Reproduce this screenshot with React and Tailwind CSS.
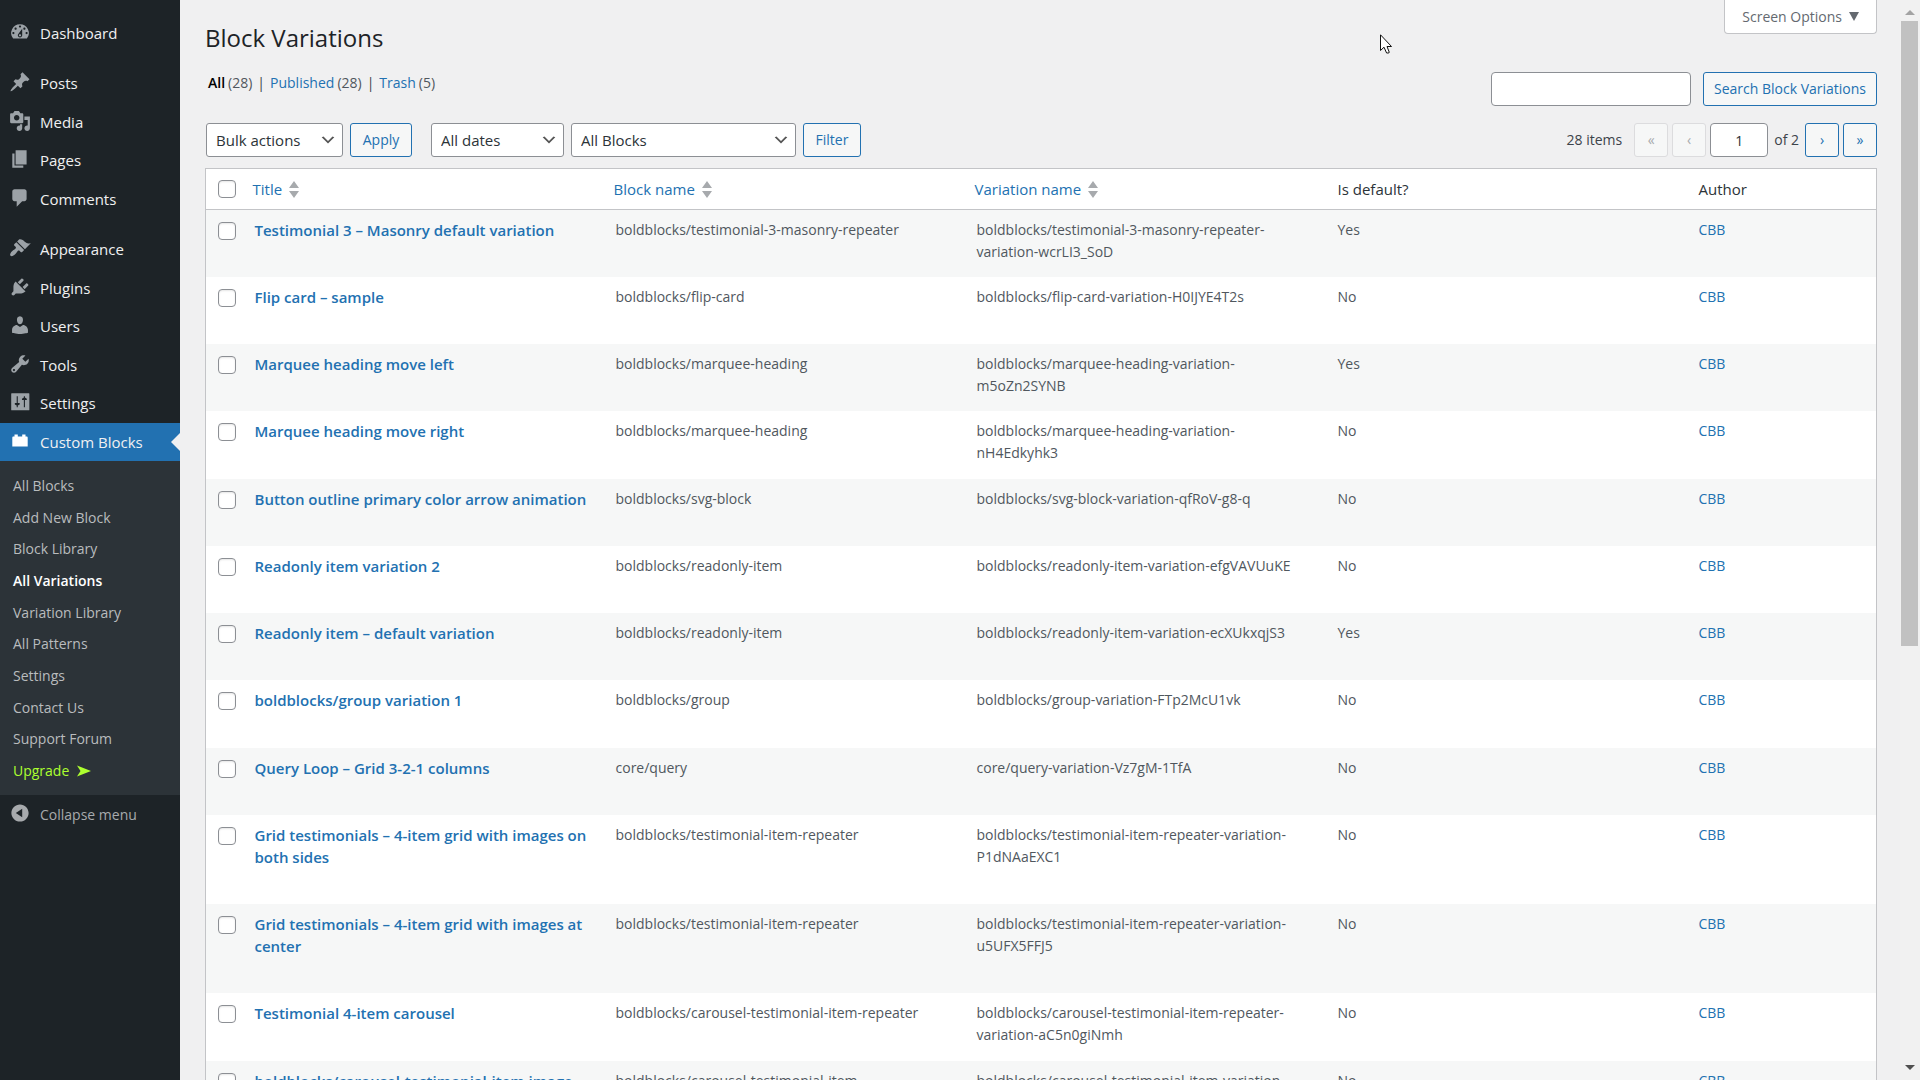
const icons = {
  dashboard:
    'M3.76 16h12.48A7.998 7.998 0 0 0 10 3a7.998 7.998 0 0 0-6.24 13zM10 4c.55 0 1 .45 1 1s-.45 1-1 1-1-.45-1-1 .45-1 1-1zM6 6c.55 0 1 .45 1 1s-.45 1-1 1-1-.45-1-1 .45-1 1-1zm8 0c.55 0 1 .45 1 1s-.45 1-1 1-1-.45-1-1 .45-1 1-1zm-5.37 5.55L12 7v6c0 1.1-.9 2-2 2s-2-.9-2-2c0-.57.24-1.08.63-1.45zM4 10c.55 0 1 .45 1 1s-.45 1-1 1-1-.45-1-1 .45-1 1-1zm12 0c.55 0 1 .45 1 1s-.45 1-1 1-1-.45-1-1 .45-1 1-1zm-5 3c0-.55-.45-1-1-1s-1 .45-1 1 .45 1 1 1 1-.45 1-1z',
  posts:
    'M10.44 3.02l1.82-1.82 6.36 6.35-1.83 1.82c-1.05-.68-2.48-.57-3.41.36l-.75.75c-.92.93-1.04 2.35-.35 3.41l-1.83 1.82-2.41-2.41-2.8 2.79c-.42.42-3.38 2.71-3.8 2.29s1.86-3.39 2.28-3.81l2.79-2.79L4.1 9.36l1.83-1.82c1.05.69 2.48.57 3.4-.36l.75-.75c.93-.92 1.05-2.35.36-3.41z',
  media:
    'M13 11V4c0-.55-.45-1-1-1h-1.67L9 1H5L3.67 3H2c-.55 0-1 .45-1 1v7c0 .55.45 1 1 1h10c.55 0 1-.45 1-1zM7 4.5c1.38 0 2.5 1.12 2.5 2.5S8.38 9.5 7 9.5 4.5 8.38 4.5 7 5.62 4.5 7 4.5zM14 6h5v10.5c0 1.38-1.12 2.5-2.5 2.5S14 17.88 14 16.5s1.12-2.5 2.5-2.5c.17 0 .34.02.5.05V9h-3V6zm-4 8.05V13h2v3.5c0 1.38-1.12 2.5-2.5 2.5S7 17.88 7 16.5 8.12 14 9.5 14c.17 0 .34.02.5.05z',
  pages: 'M6 15V2h10v13H6zm-1 1h8v2H3V5h2v11z',
  comments: 'M5 2h9c1.1 0 2 .9 2 2v7c0 1.1-.9 2-2 2h-2l-5 5v-5H5c-1.1 0-2-.9-2-2V4c0-1.1.9-2 2-2z',
  appearance:
    'M14.48 11.06L7.41 3.99l1.5-1.5c.5-.56 2.3-.47 3.51.32 1.21.8 1.43 1.28 2.91 2.1 1.18.64 2.45 1.26 4.45.85zm-.71.71L6.7 4.7 4.93 6.47c-.39.39-.39 1.02 0 1.41l1.06 1.06c.39.39.39 1.03 0 1.42-.6.6-1.43 1.11-2.21 1.69-.35.26-.7.53-1.01.84C1.43 14.23.4 16.08 1.4 17.07c.99 1 2.84-.03 4.18-1.36.31-.31.58-.66.85-1.02.57-.78 1.08-1.61 1.69-2.21.39-.39 1.02-.39 1.41 0l1.06 1.06c.39.39 1.02.39 1.41 0z',
  plugins:
    'M13.11 4.36L9.87 7.6 8 5.73l3.24-3.24c.35-.34 1.05-.2 1.56.32.52.51.66 1.21.31 1.55zm-8 1.77l.91-1.12 9.01 9.01-1.19.84c-.71.71-2.63 1.16-3.82 1.16H6.14L4.9 17.26c-.59.59-1.54.59-2.12 0-.59-.58-.59-1.53 0-2.12l1.24-1.24v-3.88c0-1.13.4-3.19 1.09-3.89zm7.26 3.97l3.24-3.24c.34-.35 1.04-.21 1.55.31.52.51.66 1.21.31 1.55l-3.24 3.25z',
  users:
    'M10 9.25c-2.27 0-2.73-3.44-2.73-3.44C7 4.02 7.82 2 9.97 2c2.16 0 2.98 2.02 2.71 3.81 0 0-.41 3.44-2.68 3.44zm0 2.57L12.72 10c2.39 0 4.52 2.33 4.52 4.53v2.49s-3.65 1.13-7.24 1.13c-3.65 0-7.24-1.13-7.24-1.13v-2.49c0-2.25 1.94-4.48 4.47-4.48z',
  tools:
    'M16.68 9.77c-1.34 1.34-3.3 1.67-4.95.99l-5.41 6.52c-.99.99-2.59.99-3.58 0s-.99-2.59 0-3.57l6.52-5.42c-.68-1.65-.35-3.61.99-4.95 1.28-1.28 3.12-1.62 4.72-1.06l-2.89 2.89 2.82 2.82 2.86-2.87c.53 1.58.18 3.39-1.08 4.65zM3.81 16.21c.4.39 1.04.39 1.43 0 .4-.4.4-1.04 0-1.43-.39-.4-1.03-.4-1.43 0-.39.39-.39 1.03 0 1.43z',
  settings:
    'M2.5 2h15.500a.5.5 0 0 1 .5.500v14.500a.5.5 0 0 1-.5.500H2.500a.5.5 0 0 1-.5-.5V2.500a.5.5 0 0 1 .5-.5zM7 4.700V11H5.300v1.200L7 13.200V14.700H8V13.200L9.700 12.200V11H8V4.700zM13.500 4.700V6L11.800 7v1.200H13.500V14.700H14.500V8.200H16.200V7L14.500 6V4.700z',
  block: 'M15 6V4h-3v2H8V4H5v2H4c-.6 0-1 .4-1 1v8h14V7c0-.6-.4-1-1-1h-1z',
  collapse:
    'M10 2.16c4.33 0 7.84 3.51 7.84 7.84s-3.51 7.84-7.84 7.84S2.16 14.33 2.16 10 5.71 2.16 10 2.16zm2 11.72V6.12L6.18 9.97z',
};

const contentMenu = [
  { label: 'Posts', icon: 'posts' },
  { label: 'Media', icon: 'media' },
  { label: 'Pages', icon: 'pages' },
  { label: 'Comments', icon: 'comments' },
];

const adminMenu = [
  { label: 'Appearance', icon: 'appearance' },
  { label: 'Plugins', icon: 'plugins' },
  { label: 'Users', icon: 'users' },
  { label: 'Tools', icon: 'tools' },
  { label: 'Settings', icon: 'settings' },
  { label: 'Custom Blocks', icon: 'block', active: true },
];

const subMenu = [
  'All Blocks',
  'Add New Block',
  'Block Library',
  'All Variations',
  'Variation Library',
  'All Patterns',
  'Settings',
  'Contact Us',
  'Support Forum',
];

const rows = [
  ['Testimonial 3 – Masonry default variation', 'boldblocks/testimonial-3-masonry-repeater', 'boldblocks/testimonial-3-masonry-repeater-variation-wcrLI3_SoD', 'Yes'],
  ['Flip card – sample', 'boldblocks/flip-card', 'boldblocks/flip-card-variation-H0IJYE4T2s', 'No'],
  ['Marquee heading move left', 'boldblocks/marquee-heading', 'boldblocks/marquee-heading-variation-m5oZn2SYNB', 'Yes'],
  ['Marquee heading move right', 'boldblocks/marquee-heading', 'boldblocks/marquee-heading-variation-nH4Edkyhk3', 'No'],
  ['Button outline primary color arrow animation', 'boldblocks/svg-block', 'boldblocks/svg-block-variation-qfRoV-g8-q', 'No'],
  ['Readonly item variation 2', 'boldblocks/readonly-item', 'boldblocks/readonly-item-variation-efgVAVUuKE', 'No'],
  ['Readonly item – default variation', 'boldblocks/readonly-item', 'boldblocks/readonly-item-variation-ecXUkxqjS3', 'Yes'],
  ['boldblocks/group variation 1', 'boldblocks/group', 'boldblocks/group-variation-FTp2McU1vk', 'No'],
  ['Query Loop – Grid 3-2-1 columns', 'core/query', 'core/query-variation-Vz7gM-1TfA', 'No'],
  ['Grid testimonials – 4-item grid with images on both sides', 'boldblocks/testimonial-item-repeater', 'boldblocks/testimonial-item-repeater-variation-P1dNAaEXC1', 'No'],
  ['Grid testimonials – 4-item grid with images at center', 'boldblocks/testimonial-item-repeater', 'boldblocks/testimonial-item-repeater-variation-u5UFX5FFJ5', 'No'],
  ['Testimonial 4-item carousel', 'boldblocks/carousel-testimonial-item-repeater', 'boldblocks/carousel-testimonial-item-repeater-variation-aC5n0giNmh', 'No'],
  ['boldblocks/carousel-testimonial-item image', 'boldblocks/carousel-testimonial-item', 'boldblocks/carousel-testimonial-item-variation-k2Lm8QwXz', 'No'],
];

function Icon({ name }) {
  return (
    <svg viewBox="0 0 20 20" className="mb-[2px] size-[22px] shrink-0 fill-current" aria-hidden="true">
      <path fillRule="evenodd" d={icons[name]} />
    </svg>
  );
}

function MenuItem({ label, icon, active }) {
  return (
    <a
      href="#"
      className={
        active
          ? 'relative flex items-center gap-[9px] bg-[#2271b1] pl-[9px] text-white'
          : 'flex items-center gap-[9px] pl-[9px] text-[#9ca2a7] hover:text-[#72aee6]'
      }
    >
      <Icon name={icon} />
      <span className="pt-px text-[#f0f0f1]">{label}</span>
      {active && (
        <span className="absolute right-0 border-y-[9px] border-r-[9px] border-y-transparent border-r-[#f0f0f1]" />
      )}
    </a>
  );
}

function Sidebar() {
  return (
    <nav className="w-[180px] shrink-0 bg-[#1d2327] pt-[14px] text-[15px]">
      <div className="grid h-[38px]">
        <MenuItem label="Dashboard" icon="dashboard" />
      </div>
      <div className="mt-3 grid h-[154px] grid-rows-4">
        {contentMenu.map((item) => (
          <MenuItem key={item.label} {...item} />
        ))}
      </div>
      <div className="mt-3 grid h-[231px] grid-rows-6">
        {adminMenu.map((item) => (
          <MenuItem key={item.label} {...item} />
        ))}
      </div>

      {/* Custom Blocks submenu */}
      <div className="bg-[#2c3338] pt-[9px] pb-2 text-sm">
        <div className="grid h-[317px] grid-rows-10">
          {subMenu.map((label) => (
            <a
              key={label}
              href="#"
              className={
                label === 'All Variations'
                  ? 'flex items-center pl-[13px] font-semibold text-white'
                  : 'flex items-center pl-[13px] text-[#b9bcbe] hover:text-[#72aee6]'
              }
            >
              {label}
            </a>
          ))}
          <a href="#" className="flex items-center gap-2 pl-[13px] text-[#adff2f]">
            Upgrade
            <svg viewBox="0 0 14 12" className="h-3 w-[14px] fill-current" aria-hidden="true">
              <path d="M0 0.500L14 6L0 11.500L3.500 6z" />
            </svg>
          </a>
        </div>
      </div>

      <button type="button" className="flex h-[38px] w-full items-center gap-[9px] pl-[9px] text-sm text-[#a7aaad]">
        <Icon name="collapse" />
        <span className="pt-px">Collapse menu</span>
      </button>
    </nav>
  );
}

function Select({ label, className, children }) {
  return (
    <div className="relative">
      <select
        aria-label={label}
        className={`h-[34px] appearance-none rounded-[3px] border border-[#8c8f94] bg-white pt-[2px] pr-7 pl-[9px] text-[15px] text-[#2c3338] ${className}`}
      >
        {children}
      </select>
      <svg
        viewBox="0 0 20 20"
        className="pointer-events-none absolute top-2 right-[6px] size-[18px] fill-[#555]"
        aria-hidden="true"
      >
        <path d="M5 6l5 5 5-5 2 1-7 7-7-7 2-1z" />
      </svg>
    </div>
  );
}

function Button({ className = '', ...props }) {
  return (
    <button
      type="button"
      className={`rounded-[3px] border border-[#2271b1] bg-[#f6f7f7] text-[#2271b1] ${className}`}
      {...props}
    />
  );
}

function Checkbox({ label }) {
  return (
    <input
      type="checkbox"
      aria-label={label}
      className="block size-[18px] appearance-none rounded-[4px] border border-[#8c8f94] bg-white shadow-[inset_0_1px_2px_rgba(0,0,0,0.1)] checked:bg-[#2271b1]"
    />
  );
}

function SortHeader({ children }) {
  return (
    <th className="px-[9px] font-normal">
      <a href="#" className="flex items-center gap-[7px] text-[#2271b1]">
        {children}
        <svg viewBox="0 0 10 17" className="h-[17px] w-[10px] fill-[#a7aaad]" aria-hidden="true">
          <path d="M5 0L10 7H0zM5 17L0 10H10z" />
        </svg>
      </a>
    </th>
  );
}

function VariationsTable() {
  return (
    <table className="w-full table-fixed border border-[#c3c4c7] bg-white text-left text-sm leading-[22px] text-[#50575e]">
      <colgroup>
        <col className="w-[38px]" />
        <col />
        <col />
        <col />
        <col />
        <col className="w-[189px]" />
      </colgroup>
      <thead>
        <tr className="h-[41px] border-b border-[#c3c4c7] text-[15px] text-[#2c3338]">
          <th className="pl-3">
            <Checkbox label="Select All" />
          </th>
          <SortHeader>Title</SortHeader>
          <SortHeader>Block name</SortHeader>
          <SortHeader>Variation name</SortHeader>
          <th className="px-[11px] font-normal">Is default?</th>
          <th className="px-[11px] font-normal">Author</th>
        </tr>
      </thead>
      <tbody>
        {rows.map(([title, block, variation, isDefault]) => (
          <tr key={title} className="h-[67px] align-top odd:bg-[#f6f7f7] nth-[4n]:h-[68px]">
            <td className="pt-3 pl-3">
              <Checkbox label={`Select ${title}`} />
            </td>
            <td className="px-[11px] pt-[9px] pb-9 text-[15px]">
              <a href="#" className="block font-semibold text-[#2271b1]">
                {title}
              </a>
            </td>
            <td className="px-[11px] pt-[9px]">{block}</td>
            <td className="px-[11px] pt-[9px]">{variation}</td>
            <td className="px-[11px] pt-[9px]">{isDefault}</td>
            <td className="px-[11px] pt-[9px]">
              <a href="#" className="text-[#2271b1]">
                CBB
              </a>
            </td>
          </tr>
        ))}
      </tbody>
    </table>
  );
}

function Scrollbar() {
  return (
    <div className="flex w-5 shrink-0 flex-col items-center bg-[#f1f1f1] py-[10px] pr-px" aria-hidden="true">
      <span className="border-x-[5px] border-b-[5px] border-x-transparent border-b-[#a3a3a3]" />
      <span className="mt-[6px] h-[59%] w-[17px] bg-[#c1c1c1]" />
      <span className="mt-auto border-x-[5px] border-t-[5px] border-x-transparent border-t-[#505050]" />
    </div>
  );
}

export default function App() {
  return (
    <div className="relative flex h-screen overflow-hidden bg-[#f0f0f1] font-['Open_Sans','Noto_Sans',sans-serif] text-sm text-[#3c434a]">
      <Sidebar />

      <main className="min-w-0 flex-1 pr-[23px] pl-[25px]">
        <div className="flex items-start justify-between">
          <h1 className="pt-5 text-2xl leading-9 text-[#1d2327]">Block Variations</h1>
          <button
            type="button"
            className="flex h-[34px] items-center gap-[7px] rounded-b-[4px] border border-t-0 border-[#c3c4c7] bg-white px-[17px] text-[#646970]"
          >
            Screen Options
            <svg viewBox="0 0 10 9" className="h-[9px] w-[10px] fill-current" aria-hidden="true">
              <path d="M0 0H10L5 9z" />
            </svg>
          </button>
        </div>

        <div className="flex items-start justify-between">
          <ul className="flex gap-[5px] pt-[17px] pl-[3px] leading-5">
            <li className="flex gap-[3px]">
              <a href="#" className="font-semibold text-black">All</a>
              <span className="text-[#50575e]">(28)</span>
            </li>
            <li>|</li>
            <li className="flex gap-[3px]">
              <a href="#" className="text-[#2271b1]">Published</a>
              <span className="text-[#50575e]">(28)</span>
            </li>
            <li>|</li>
            <li className="flex gap-[3px]">
              <a href="#" className="text-[#2271b1]">Trash</a>
              <span className="text-[#50575e]">(5)</span>
            </li>
          </ul>
          <form className="flex gap-3 pt-4">
            <input
              type="search"
              aria-label="Search Block Variations"
              className="h-[34px] w-[200px] rounded-[4px] border border-[#8c8f94] bg-white px-2"
            />
            <Button className="h-[34px] w-[174px]">Search Block Variations</Button>
          </form>
        </div>

        <div className="flex items-center justify-between pt-[17px] pb-[11px]">
          <div className="flex gap-[7px] pl-px">
            <Select label="Bulk actions" className="w-[137px]">
              <option>Bulk actions</option>
            </Select>
            <Button className="mr-3 h-[34px] w-[62px]">Apply</Button>
            <Select label="Filter by date" className="w-[133px]">
              <option>All dates</option>
            </Select>
            <Select label="Filter by block" className="w-[225px]">
              <option>All Blocks</option>
            </Select>
            <Button className="h-[34px] w-[58px]">Filter</Button>
          </div>
          <div className="flex items-center gap-1">
            <span className="pr-2">28 items</span>
            <button type="button" disabled className="size-[34px] rounded-[3px] border border-[#dcdcde] bg-[#f6f7f7] text-[#a7aaad]">
              «
            </button>
            <button type="button" disabled className="size-[34px] rounded-[3px] border border-[#dcdcde] bg-[#f6f7f7] text-[#a7aaad]">
              ‹
            </button>
            <input
              type="text"
              aria-label="Current Page"
              defaultValue="1"
              className="h-[34px] w-[58px] rounded-[4px] border border-[#8c8f94] bg-white text-center text-[#2c3338]"
            />
            <span className="px-[2px]">of 2</span>
            <Button className="size-[34px]">›</Button>
            <Button className="size-[34px]">»</Button>
          </div>
        </div>

        <VariationsTable />
      </main>

      <Scrollbar />

      {/* Mouse pointer */}
      <svg viewBox="0 0 12 20" className="absolute top-[34px] left-[1380px] h-5 w-3" aria-hidden="true">
        <path d="M0.500 0.800V16.500L4 13.200L6.600 19H8.800L9.200 18L7 12.500H11.500z" fill="#fff" stroke="#111" />
      </svg>
    </div>
  );
}
